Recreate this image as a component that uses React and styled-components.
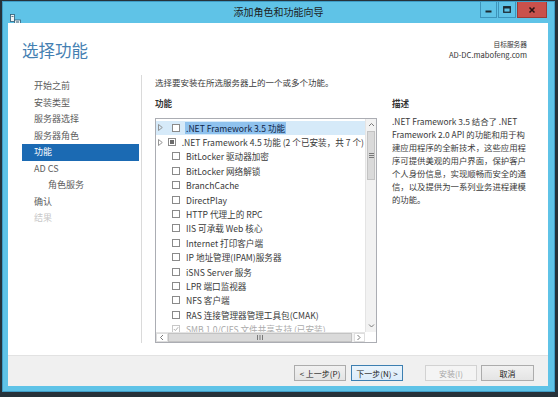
import React from 'react'
import styled, { createGlobalStyle, css } from 'styled-components'

const GlobalStyle = createGlobalStyle`
  html, body { margin: 0; padding: 0; }
  body {
    width: 558px;
    height: 397px;
    overflow: hidden;
    background: #26323a;
    font-family: "Noto Sans CJK SC", "Liberation Sans", sans-serif;
  }
`

const Window = styled.div`
  width: 553px;
  height: 391px;
  margin: 1px 0 0 2px;
  box-sizing: border-box;
  border: 1px solid #3f9cc6;
  background: #5fc3e7;
  display: flex;
  flex-direction: column;
`

const TitleBar = styled.div`
  height: 21px;
  display: grid;
  grid-template-columns: 1fr auto 1fr;
  align-items: start;
`

const AppIcon = styled.div`
  margin: 4px 0 0 7px;
  width: 11px;
  height: 11px;
`

const Title = styled.div`
  font-size: 10px;
  line-height: 20px;
  color: #1c1c1c;
`

const Controls = styled.div`
  justify-self: end;
  display: flex;
  gap: 1px;
  margin-right: 7px;
`

const CtrlButton = styled.div`
  width: ${p => p.w}px;
  height: 16px;
  box-sizing: border-box;
  display: flex;
  align-items: center;
  justify-content: center;
  border: 1px solid ${p => (p.close ? '#9c3b36' : '#3d94bb')};
  border-top: none;
  background: ${p => (p.close ? '#c9514c' : '#5fc3e7')};
`

const Client = styled.div`
  flex: 1;
  margin: 0 6px 5px 5px;
  background: #fff;
  display: flex;
  flex-direction: column;
`

const Header = styled.div`
  height: 52px;
  box-sizing: border-box;
  padding: 17px 21px 0 14px;
  display: flex;
  justify-content: space-between;
  align-items: flex-start;
`

const PageTitle = styled.div`
  font-size: 16.5px;
  line-height: 20px;
  color: #4580b2;
`

const ServerInfo = styled.div`
  text-align: right;
  color: #333;
  font-size: 7.6px;
  line-height: 9.5px;
  span { display: block; }
  span:first-child { font-size: 6.7px; }
`

const Body = styled.div`
  flex: 1;
  display: flex;
  padding-bottom: 12px;
`

const Nav = styled.div`
  width: 134px;
  box-sizing: border-box;
  border-right: 1px solid #dadada;
  padding: 3px 2px 0 14px;
`

const NavItem = styled.div`
  height: 16.5px;
  line-height: 16.5px;
  font-size: 9px;
  padding-left: ${p => (p.indent ? 26 : 12)}px;
  color: #5c5c5c;
  ${p => p.active && css`
    background: #1b6ab3;
    color: #fff;
  `}
  ${p => p.disabled && css`
    color: #c8c8c8;
  `}
`

const Main = styled.div`
  flex: 1;
  padding-left: 13px;
  color: #3a3a3a;
`

const Instruction = styled.div`
  font-size: 8.5px;
  line-height: 14px;
`

const Columns = styled.div`
  margin-top: 7px;
  display: flex;
`

const Label = styled.div`
  font-size: 8.6px;
  line-height: 14px;
  font-weight: bold;
  color: #333;
`

const ListBox = styled.div`
  margin-top: 8px;
  width: 222px;
  height: 225px;
  box-sizing: border-box;
  border: 1px solid #abadb3;
  display: grid;
  grid-template-columns: 1fr 11px;
  grid-template-rows: 1fr 10px;
  background: #fff;
`

const Rows = styled.div`
  overflow: hidden;
  padding-top: 1.5px;
`

const Row = styled.div`
  height: 14.4px;
  display: flex;
  align-items: center;
  padding-left: 2px;
  white-space: nowrap;
  font-size: 8.6px;
  color: ${p => (p.installed ? '#ababab' : '#3a3a3a')};
  background: ${p => (p.selected ? '#d6eaf9' : 'transparent')};
`

const Expander = styled.div`
  width: 14px;
  height: 14px;
  display: flex;
  align-items: center;
`

const Check = styled.div`
  width: 8px;
  height: 8px;
  box-sizing: border-box;
  border: 1px solid ${p => (p.installed ? '#c8c8c8' : '#8a8a8a')};
  background: #fff;
  margin-right: 5px;
  display: flex;
  align-items: center;
  justify-content: center;
  flex-shrink: 0;
`

const Partial = styled.div`
  width: 4px;
  height: 4px;
  background: #6b6b6b;
`

const RowText = styled.span`
  padding: 0 1px;
  line-height: 12px;
  ${p => p.selected && css`
    background: #8fc2ee;
    color: #0f2446;
  `}
`

const VScroll = styled.div`
  display: flex;
  flex-direction: column;
  background: #f2f2f2;
  border-left: 1px solid #e4e4e4;
`

const ArrowBox = styled.div`
  flex: 0 0 ${p => p.size || 12}px;
  display: flex;
  align-items: center;
  justify-content: center;
`

const VThumb = styled.div`
  height: 47px;
  margin: 0 1px;
  background: #dadada;
  border: 1px solid #c3c3c3;
  display: flex;
  align-items: center;
  justify-content: center;
`

const Track = styled.div`
  flex: 1;
`

const HScroll = styled.div`
  display: flex;
  background: #f2f2f2;
  border-top: 1px solid #e4e4e4;
`

const HArrow = styled.div`
  width: ${p => p.w}px;
  box-sizing: border-box;
  border: 1px solid #dedede;
  background: #fff;
  display: flex;
  align-items: center;
  justify-content: center;
`

const HThumb = styled.div`
  flex: 1;
  margin: 0 2px 0 0;
  background: #dadada;
  border: 1px solid #c3c3c3;
  display: flex;
  align-items: center;
  justify-content: center;
`

const Corner = styled.div`
  background: #fff;
`

const Desc = styled.div`
  margin-left: 15px;
  width: 142px;
`

const DescText = styled.div`
  margin-top: 4.5px;
  font-size: 8.4px;
  line-height: 13.1px;
  color: #3a3a3a;
  white-space: nowrap;
  span { display: block; }
`

const Footer = styled.div`
  height: 31px;
  box-sizing: border-box;
  background: #f0f0f0;
  border-top: 1px solid #e2e2e2;
  display: flex;
  justify-content: flex-end;
  align-items: flex-start;
  padding: 9px 14px 0 0;
`

const Button = styled.div`
  width: ${p => p.w || 52}px;
  height: 16px;
  margin-left: ${p => p.gap}px;
  box-sizing: border-box;
  border: 1px solid #acacac;
  background: linear-gradient(#f1f1f1, #e4e4e4);
  font-size: 8px;
  color: #222;
  display: flex;
  align-items: center;
  justify-content: center;
  white-space: nowrap;
  ${p => p.primary && css`
    border-color: #3c7fb1;
    background: linear-gradient(#eaf4fc, #dcecfa);
  `}
  ${p => p.disabled && css`
    border-color: #d2d2d2;
    background: #f4f4f4;
    color: #a6a6a6;
  `}
`

const steps = [
  { label: '开始之前' },
  { label: '安装类型' },
  { label: '服务器选择' },
  { label: '服务器角色' },
  { label: '功能', active: true },
  { label: 'AD CS' },
  { label: '角色服务', indent: true },
  { label: '确认' },
  { label: '结果', disabled: true },
]

const features = [
  { label: '.NET Framework 3.5 功能', expand: true, selected: true },
  { label: '.NET Framework 4.5 功能 (2 个已安装，共 7 个)', expand: true, partial: true },
  { label: 'BitLocker 驱动器加密' },
  { label: 'BitLocker 网络解锁' },
  { label: 'BranchCache' },
  { label: 'DirectPlay' },
  { label: 'HTTP 代理上的 RPC' },
  { label: 'IIS 可承载 Web 核心' },
  { label: 'Internet 打印客户端' },
  { label: 'IP 地址管理(IPAM)服务器' },
  { label: 'iSNS Server 服务' },
  { label: 'LPR 端口监视器' },
  { label: 'NFS 客户端' },
  { label: 'RAS 连接管理器管理工具包(CMAK)' },
  { label: 'SMB 1.0/CIFS 文件共享支持 (已安装)', installed: true },
]

const description = [
  '.NET Framework 3.5 结合了 .NET',
  'Framework 2.0 API 的功能和用于构',
  '建应用程序的全新技术，这些应用程',
  '序可提供美观的用户界面，保护客户',
  '个人身份信息，实现顺畅而安全的通',
  '信，以及提供为一系列业务进程建模',
  '的功能。',
]

const Chevron = ({ dir }) => {
  const pts = {
    up: '1,4 3.5,1.5 6,4',
    down: '1,1.5 3.5,4 6,1.5',
    left: '4,1 1.5,3.5 4,6',
    right: '1.5,1 4,3.5 1.5,6',
  }[dir]
  return (
    <svg width="7" height="7" viewBox="0 0 7 7">
      <polyline points={pts} fill="none" stroke="#7a7a7a" strokeWidth="1" />
    </svg>
  )
}

export default function App() {
  return (
    <>
      <GlobalStyle />
      <Window>
        <TitleBar>
          <AppIcon>
            <svg width="11" height="11" viewBox="0 0 11 11">
              <rect x="0.5" y="0.5" width="4" height="7" fill="#f4f4f4" stroke="#2f5d75" strokeWidth="0.8" />
              <rect x="1.5" y="2" width="2" height="0.8" fill="#2f5d75" />
              <rect x="4.5" y="6" width="6" height="4.5" fill="#e9eef2" stroke="#2f5d75" strokeWidth="0.8" />
              <rect x="6" y="7.5" width="3" height="1" fill="#2f5d75" />
            </svg>
          </AppIcon>
          <Title>添加角色和功能向导</Title>
          <Controls>
            <CtrlButton w={17}>
              <svg width="7" height="7" viewBox="0 0 7 7">
                <rect x="0.5" y="4.5" width="6" height="2" fill="#1d2a31" />
              </svg>
            </CtrlButton>
            <CtrlButton w={18}>
              <svg width="8" height="7" viewBox="0 0 8 7">
                <rect x="0.75" y="0.75" width="6.5" height="5.5" fill="none" stroke="#1d2a31" strokeWidth="1.3" />
                <rect x="0.5" y="0.5" width="7" height="2" fill="#1d2a31" />
              </svg>
            </CtrlButton>
            <CtrlButton w={30} close>
              <svg width="8" height="8" viewBox="0 0 8 8">
                <path d="M1.5 1.5 L6.5 6.5 M6.5 1.5 L1.5 6.5" stroke="#2b1414" strokeWidth="1.6" />
              </svg>
            </CtrlButton>
          </Controls>
        </TitleBar>

        <Client>
          <Header>
            <PageTitle>选择功能</PageTitle>
            <ServerInfo>
              <span>目标服务器</span>
              <span>AD-DC.mabofeng.com</span>
            </ServerInfo>
          </Header>

          <Body>
            <Nav>
              {steps.map(s => (
                <NavItem key={s.label} active={s.active} indent={s.indent} disabled={s.disabled}>
                  {s.label}
                </NavItem>
              ))}
            </Nav>

            <Main>
              <Instruction>选择要安装在所选服务器上的一个或多个功能。</Instruction>
              <Columns>
                <div>
                  <Label>功能</Label>
                  <ListBox>
                    <Rows>
                      {features.map(f => (
                        <Row key={f.label} selected={f.selected} installed={f.installed}>
                          <Expander>
                            {f.expand && (
                              <svg width="5" height="7" viewBox="0 0 5 7">
                                <polygon points="0.5,0.5 4.3,3.5 0.5,6.5" fill="none" stroke="#8a8a8a" strokeWidth="0.9" />
                              </svg>
                            )}
                          </Expander>
                          <Check installed={f.installed}>
                            {f.partial && <Partial />}
                            {f.installed && (
                              <svg width="6" height="6" viewBox="0 0 6 6">
                                <polyline points="0.8,3 2.4,4.6 5.2,1.2" fill="none" stroke="#b0b0b0" strokeWidth="1" />
                              </svg>
                            )}
                          </Check>
                          <RowText selected={f.selected}>{f.label}</RowText>
                        </Row>
                      ))}
                    </Rows>
                    <VScroll>
                      <ArrowBox size={12}><Chevron dir="up" /></ArrowBox>
                      <VThumb>
                        <svg width="5" height="5" viewBox="0 0 5 5">
                          <path d="M0 0.5 H5 M0 2.5 H5 M0 4.5 H5" stroke="#6e6e6e" strokeWidth="0.9" />
                        </svg>
                      </VThumb>
                      <Track />
                      <ArrowBox size={11}><Chevron dir="down" /></ArrowBox>
                    </VScroll>
                    <HScroll>
                      <HArrow w={12}><Chevron dir="left" /></HArrow>
                      <HThumb>
                        <svg width="6" height="5" viewBox="0 0 6 5">
                          <path d="M0.5 0 V5 M3 0 V5 M5.5 0 V5" stroke="#6e6e6e" strokeWidth="0.9" />
                        </svg>
                      </HThumb>
                      <HArrow w={11}><Chevron dir="right" /></HArrow>
                    </HScroll>
                    <Corner />
                  </ListBox>
                </div>
                <Desc>
                  <Label>描述</Label>
                  <DescText>
                    {description.map(line => (
                      <span key={line}>{line}</span>
                    ))}
                  </DescText>
                </Desc>
              </Columns>
            </Main>
          </Body>

          <Footer>
            <Button gap={0}>&lt; 上一步(P)</Button>
            <Button gap={5} primary>下一步(N) &gt;</Button>
            <Button gap={22} disabled>安装(I)</Button>
            <Button gap={4} w={53}>取消</Button>
          </Footer>
        </Client>
      </Window>
    </>
  )
}
